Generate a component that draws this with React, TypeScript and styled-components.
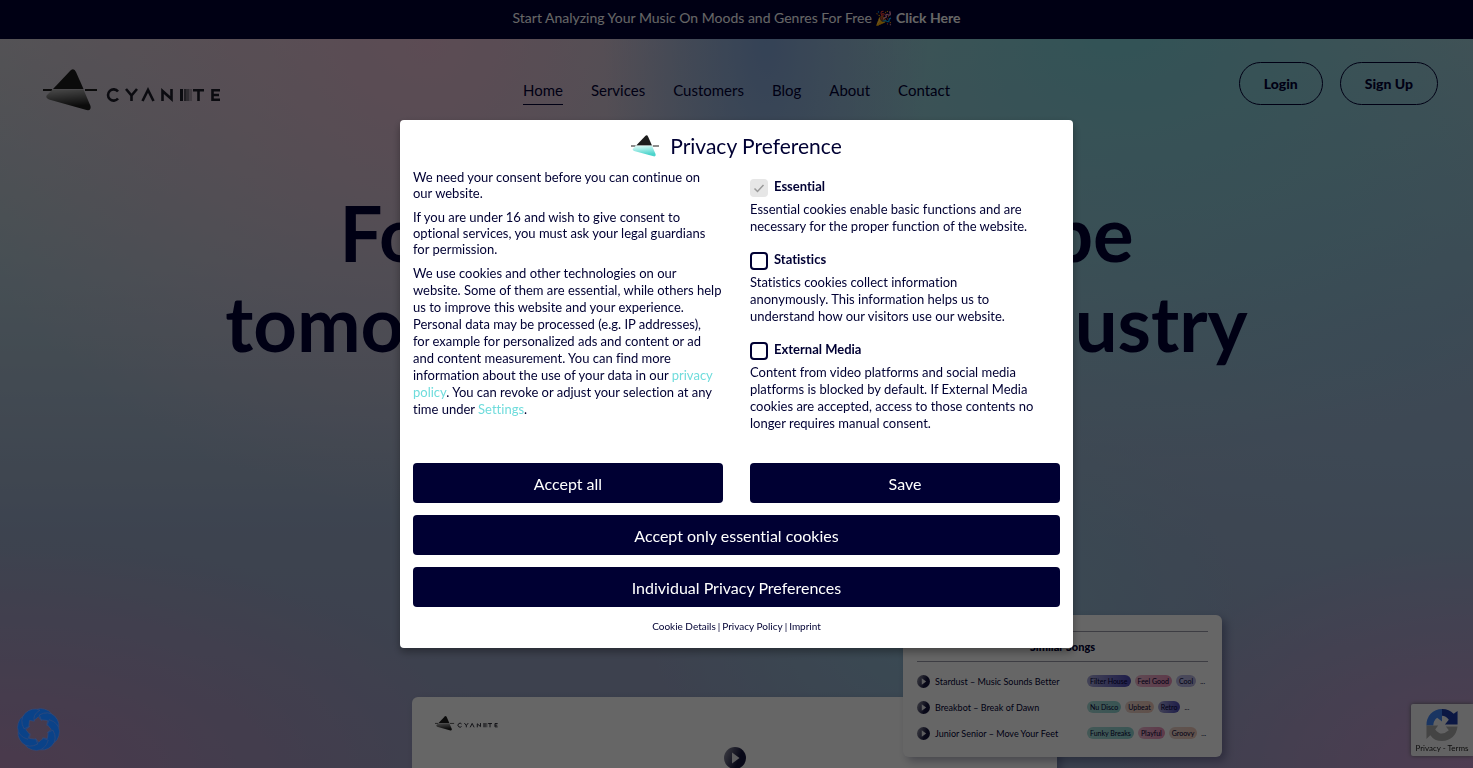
import React, { useState } from "react";
import styled, { createGlobalStyle } from "styled-components";

const navy = "#000033";
const sans = `Lato, "Open Sans", "Liberation Sans", sans-serif`;

const GlobalStyle = createGlobalStyle`
  *, *::before, *::after { box-sizing: border-box; }
  body { margin: 0; font-family: ${sans}; font-variant-ligatures: none; color: ${navy}; overflow: hidden; }
  a { color: inherit; text-decoration: none; }
  h1, h2, h3, p, ul { margin: 0; padding: 0; }
  ul { list-style: none; }
  button { font-family: inherit; font-variant-ligatures: inherit; cursor: pointer; }
`;

const Page = styled.div`
  display: flex;
  flex-direction: column;
  height: 100vh;
  overflow: hidden;
  background:
    radial-gradient(ellipse 11% 50% at 52% 5%, rgba(122, 160, 215, 0.85), transparent),
    radial-gradient(ellipse 34% 60% at 29% 6%, rgba(232, 186, 210, 0.9), transparent),
    radial-gradient(ellipse 46% 56% at 76% 4%, rgba(118, 208, 216, 0.9), transparent),
    radial-gradient(ellipse 34% 30% at 0% 100%, rgba(190, 142, 190, 0.85), transparent),
    radial-gradient(ellipse 24% 30% at 100% 100%, rgba(200, 150, 205, 0.9), transparent),
    radial-gradient(ellipse 20% 30% at 64% 80%, rgba(142, 190, 212, 0.9), transparent),
    radial-gradient(ellipse 50% 60% at 96% 46%, rgba(152, 180, 212, 0.95), transparent),
    linear-gradient(180deg, #d2d2d6 0%, #b0c6d2 34%, #98a8c6 70%, #98a0c2 100%);
`;

const PromoBar = styled.div`
  flex: none;
  display: flex;
  justify-content: center;
  height: 39px;
  background: ${navy};
  color: #fff;
  font-size: 14px;
  line-height: 36px;
  white-space: pre;
`;

const Header = styled.header`
  display: grid;
  grid-template-columns: 1fr auto 1fr;
  align-items: center;
  flex: none;
  height: 102px;
  padding: 23px 35px;
`;

const HomeLink = styled.a`
  padding-left: 8px;
`;

const LogoSvg = styled.svg`
  display: block;
`;

const Nav = styled.nav`
  display: flex;
  gap: 28px;
`;

const NavLink = styled.a<{ $active?: boolean }>`
  padding: 4px 0;
  font-size: 15px;
  line-height: 20px;
  border-bottom: 1px solid ${(p) => (p.$active ? navy : "transparent")};
`;

const Account = styled.div`
  display: flex;
  align-self: start;
  justify-content: flex-end;
  gap: 17px;
`;

const PillLink = styled.a`
  padding: 0 24px;
  border: 1px solid ${navy};
  border-radius: 22px;
  font-size: 14px;
  font-weight: 900;
  line-height: 41px;
`;

const Headline = styled.h1`
  flex: none;
  margin-top: 47px;
  text-align: center;
  font-size: 76px;
  font-weight: 700;
  line-height: 90px;
`;

const Showcase = styled.section`
  flex: none;
  position: relative;
  width: 649px;
  margin: 329px auto 0;
  padding-right: 4px;
`;

const PlayerCard = styled.div`
  display: flex;
  flex-direction: column;
  height: 360px;
  padding: 19px 23px;
  border-radius: 6px;
  background: #fff;
  box-shadow: 4px 4px 8px rgba(0, 0, 51, 0.25);
`;

const PlayerPlay = styled.div`
  align-self: center;
  margin-top: 16px;
`;

const SongsCard = styled.div`
  position: absolute;
  top: -82px;
  right: -161px;
  width: 319px;
  padding: 16px 14px 11px;
  border-radius: 6px;
  background: #fff;
  box-shadow: 4px 4px 8px rgba(0, 0, 51, 0.3);
`;

const SongsTitle = styled.h2`
  margin-bottom: 6px;
  border: solid #9a9aa8;
  border-width: 1px 0;
  text-align: center;
  font-size: 11px;
  font-weight: 900;
  line-height: 29px;
`;

const SongRow = styled.li`
  display: grid;
  grid-template-columns: 18px 152px 1fr;
  align-items: center;
  height: 26px;
  font-size: 9px;
`;

const Tags = styled.span`
  display: flex;
  align-items: center;
  gap: 4px;
  font-size: 7px;
  white-space: nowrap;
`;

const tagTones = {
  indigo: "linear-gradient(90deg, #a9a9d8, #4a48b8)",
  pink: "linear-gradient(90deg, #f0b8d0, #ea8fb8)",
  lilac: "linear-gradient(90deg, #b9b9e8, #b4b0dc)",
  mint: "linear-gradient(90deg, #a8dcd8, #8fd4d2)",
  sand: "linear-gradient(90deg, #ecd4cc, #f0c8b8)",
};

type Tone = keyof typeof tagTones;

const Tag = styled.span<{ $tone: Tone }>`
  padding: 0 3px;
  border-radius: 6px;
  line-height: 12px;
  background: ${(p) => tagTones[p.$tone]};
`;

const Backdrop = styled.div`
  position: fixed;
  inset: 0;
  display: flex;
  align-items: center;
  justify-content: center;
  background: rgba(0, 0, 0, 0.6);
`;

const Dialog = styled.form`
  width: 673px;
  max-width: 100%;
  padding: 12px 13px 15px;
  border-radius: 4px;
  background: #fff;
  box-shadow: 0 4px 8px rgba(0, 0, 0, 0.35);
`;

const DialogTitle = styled.h2`
  display: flex;
  align-items: center;
  justify-content: center;
  gap: 11px;
  font-size: 21px;
  font-weight: 400;
  line-height: 28px;
`;

const Columns = styled.div`
  display: grid;
  grid-template-columns: 1fr 1fr;
  column-gap: 27px;
`;

const Intro = styled.div`
  padding-top: 9px;
`;

const Note = styled.p`
  margin-bottom: 8px;
  font-size: 13px;
  line-height: 16px;
  white-space: pre-line;
`;

const Copy = styled.p`
  font-size: 13px;
  line-height: 17px;
  white-space: pre-line;
`;

const AccentLink = styled.a`
  color: #6fdcdc;
`;

const Options = styled.div`
  display: flex;
  flex-direction: column;
  gap: 16px;
  padding: 18px 12px 31px 0;
`;

const OptionLabel = styled.label`
  display: flex;
  gap: 6px;
  height: 23px;
  font-size: 13px;
  font-weight: 700;
  line-height: 17px;
`;

const Checkbox = styled.input`
  appearance: none;
  width: 18px;
  height: 18px;
  margin: 1px 0 0;
  border: 2px solid ${navy};
  border-radius: 4px;
  background: #fff;
  &:checked {
    background-color: ${navy};
  }
  &:disabled {
    border-color: #e6e6e6;
    background-color: #e6e6e6;
  }
`;

const CheckWrap = styled.span`
  position: relative;
  display: flex;
  svg {
    position: absolute;
    top: 4px;
    left: 3px;
    pointer-events: none;
  }
`;

const ActionButton = styled.button`
  height: 40px;
  border: 0;
  border-radius: 4px;
  background: ${navy};
  color: #fff;
  font-size: 16px;
`;

const WideActions = styled.div`
  display: flex;
  flex-direction: column;
  gap: 12px;
  margin-top: 12px;
`;

const Legal = styled.div`
  display: flex;
  justify-content: center;
  gap: 2px;
  margin-top: 12px;
  font-size: 10px;
  line-height: 14px;
`;

const CookieWidget = styled.button`
  position: fixed;
  left: 17px;
  bottom: 17px;
  width: 43px;
  height: 43px;
  padding: 0;
  border: 0;
  background: none;
`;

const Recaptcha = styled.div`
  position: fixed;
  right: 0;
  bottom: 12px;
  display: flex;
  flex-direction: column;
  align-items: center;
  width: 62px;
  padding: 4px 0 3px;
  border-radius: 2px 0 0 2px;
  background: #f6f6f8;
  box-shadow: 0 0 4px #666;
  color: #222;
  font-size: 8px;
  line-height: 10px;
`;

const Mark = ({ id, stops }: { id: string; stops: [string, string] }) => (
  <>
    <defs>
      <linearGradient id={id} x1="0" y1="0" x2="0.2" y2="1">
        <stop offset="0.1" stopColor={stops[0]} />
        <stop offset="0.9" stopColor={stops[1]} />
      </linearGradient>
    </defs>
    <path d="M10 20 27.5 1.5Q31 -1.500 33 3L40.500 20Z" fill="#1c1c1c" />
    <path d="M0 21H9M42 21H54" stroke="#1c1c1c" strokeWidth="2" />
    <path d="M9.500 20.500H40.500L47.500 37Q48.500 42 43.500 41L6 30.500Q1 28 5 25Z" fill={`url(#${id})`} />
  </>
);

const Logo = ({ id, width }: { id: string; width: number }) => (
  <LogoSvg width={width} viewBox="0 0 178 42" role="img" aria-label="Cyanite">
    <Mark id={`${id}-mark`} stops={["#a8a8a8", "#1c1c1c"]} />
    <g fill="none" stroke="#1c1c28" strokeWidth="2.600">
      <path d="M75 22.500A5.600 5.600 0 1 0 75 29.500" />
      <path d="M83 20 88.500 26.500 94 20M88.500 26V32" />
      <path d="M99.500 32 105 21 110.500 32" />
      <path d="M119.500 32V22L128.500 30V20" />
      <path d="M150 21.300H161M155.500 21V32" />
      <path d="M177 21.300H169.500V30.700H177M169.500 26H176" />
    </g>
    <path d="M137 20h3v12h-3z" fill="#1c1c28" />
    <path d="M141 20h2v12h-2z" fill="#1c1c28" opacity=".7" />
    <path d="M143 20h3v12h-3z" fill="#1c1c28" opacity=".5" />
    <path d="M146 20h3v12h-3z" fill="#1c1c28" opacity=".25" />
  </LogoSvg>
);

const PlayIcon = ({ id, size }: { id: string; size: number }) => (
  <svg width={size} height={size} viewBox="0 0 22 22" aria-hidden="true">
    <defs>
      <linearGradient id={id} x1="0" y1="0.200" x2="1" y2="0.600">
        <stop offset="0" stopColor="#8f8fa0" />
        <stop offset="0.700" stopColor="#16163e" />
      </linearGradient>
    </defs>
    <circle cx="11" cy="11" r="11" fill={`url(#${id})`} />
    <path d="M8 5.500 15.500 11 8 16.500Z" fill="#e8e8ee" />
  </svg>
);

const songs: { name: string; tags: [string, Tone][] }[] = [
  { name: "Stardust – Music Sounds Better", tags: [["Filter House", "indigo"], ["Feel Good", "pink"], ["Cool", "lilac"]] },
  { name: "Breakbot – Break of Dawn", tags: [["Nu Disco", "mint"], ["Upbeat", "sand"], ["Retro", "indigo"]] },
  { name: "Junior Senior – Move Your Feet", tags: [["Funky Breaks", "mint"], ["Playful", "pink"], ["Groovy", "sand"]] },
];

const navItems = ["Home", "Services", "Customers", "Blog", "About", "Contact"];

const options = [
  { id: "essential", label: "Essential", text: "Essential cookies enable basic functions and are\nnecessary for the proper function of the website." },
  { id: "statistics", label: "Statistics", text: "Statistics cookies collect information\nanonymously. This information helps us to\nunderstand how our visitors use our website." },
  { id: "external", label: "External Media", text: "Content from video platforms and social media\nplatforms is blocked by default. If External Media\ncookies are accepted, access to those contents no\nlonger requires manual consent." },
];

const petals = [0, 45, 90, 135, 180, 225, 270, 315];

export default function App() {
  const [consent, setConsent] = useState<Record<string, boolean>>({ essential: true });

  return (
    <>
      <GlobalStyle />
      <Page>
        <PromoBar>
          <span>Start Analyzing Your Music On Moods and Genres For Free 🎉 </span>
          <a href="#start"><b>Click Here</b></a>
        </PromoBar>
        <Header>
          <HomeLink href="#home"><Logo id="header" width={178} /></HomeLink>
          <Nav>
            {navItems.map((item, i) => (
              <NavLink key={item} href={`#${item.toLowerCase()}`} $active={i === 0}>{item}</NavLink>
            ))}
          </Nav>
          <Account>
            <PillLink href="#login">Login</PillLink>
            <PillLink href="#signup">Sign Up</PillLink>
          </Account>
        </Header>
        <Headline>For sounds bound to be<br />tomorrow’s recording industry</Headline>
        <Showcase>
          <PlayerCard>
            <Logo id="player" width={63} />
            <PlayerPlay><PlayIcon id="play-main" size={22} /></PlayerPlay>
          </PlayerCard>
          <SongsCard>
            <SongsTitle>Similar Songs</SongsTitle>
            <ul>
              {songs.map((song, i) => (
                <SongRow key={song.name}>
                  <PlayIcon id={`play-${i}`} size={13} />
                  <span>{song.name}</span>
                  <Tags>
                    {song.tags.map(([name, tone]) => <Tag key={name} $tone={tone}>{name}</Tag>)}
                    <span>...</span>
                  </Tags>
                </SongRow>
              ))}
            </ul>
          </SongsCard>
        </Showcase>
      </Page>
      <Recaptcha>
        <svg width="34" height="35" viewBox="0 0 34 36" aria-hidden="true">
          <path d="M17 1A16 16 0 0 1 29 6L33 3V17H20L24 12Q21 8 17 8Z" fill="#1c3aa9" />
          <path d="M1 18A16 16 0 0 1 17 1V14L12 10Q8 13 8 18Z" fill="#4285f4" />
          <path d="M1 18H13L10 22Q16 30 24 23L21 19H33Q31 33 17 34Q9 34 5 28L1 32Z" fill="#ababab" />
        </svg>
        <span><a href="#privacy">Privacy</a> - <a href="#terms">Terms</a></span>
      </Recaptcha>
      <Backdrop>
        <Dialog role="dialog" aria-labelledby="consent-title" onSubmit={(e) => e.preventDefault()}>
          <DialogTitle id="consent-title">
            <svg width="28" height="22" viewBox="0 0 54 42" aria-hidden="true">
              <Mark id="dialog-mark" stops={["#d4f8f4", "#4cd4cc"]} />
            </svg>
            Privacy Preference
          </DialogTitle>
          <Columns>
            <Intro>
              <Note>{"We need your consent before you can continue on\nour website."}</Note>
              <Note>{"If you are under 16 and wish to give consent to\noptional services, you must ask your legal guardians\nfor permission."}</Note>
              <Copy>
                {"We use cookies and other technologies on our\nwebsite. Some of them are essential, while others help\nus to improve this website and your experience.\nPersonal data may be processed (e.g. IP addresses),\nfor example for personalized ads and content or ad\nand content measurement. You can find more\ninformation about the use of your data in our "}
                <AccentLink href="#policy">{"privacy\npolicy"}</AccentLink>
                {". You can revoke or adjust your selection at any\ntime under "}
                <AccentLink href="#settings">Settings</AccentLink>.
              </Copy>
            </Intro>
            <Options>
              {options.map((o) => (
                <div key={o.id}>
                  <OptionLabel htmlFor={o.id}>
                    <CheckWrap>
                      <Checkbox
                        id={o.id}
                        type="checkbox"
                        checked={!!consent[o.id]}
                        disabled={o.id === "essential"}
                        onChange={(e) => setConsent({ ...consent, [o.id]: e.target.checked })}
                      />
                      {consent[o.id] && (
                        <svg width="12" height="12" viewBox="0 0 12 12" fill="none" aria-hidden="true">
                          <path d="M1.500 6.500 4.500 9.500 10.500 3" stroke="#999" strokeWidth="1.500" />
                        </svg>
                      )}
                    </CheckWrap>
                    {o.label}
                  </OptionLabel>
                  <Copy>{o.text}</Copy>
                </div>
              ))}
            </Options>
            <ActionButton type="button">Accept all</ActionButton>
            <ActionButton type="submit">Save</ActionButton>
          </Columns>
          <WideActions>
            <ActionButton type="button">Accept only essential cookies</ActionButton>
            <ActionButton type="button">Individual Privacy Preferences</ActionButton>
          </WideActions>
          <Legal>
            <a href="#details">Cookie Details</a>|<a href="#privacy-policy">Privacy Policy</a>|<a href="#imprint">Imprint</a>
          </Legal>
        </Dialog>
      </Backdrop>
      <CookieWidget type="button" aria-label="Open privacy preferences">
        <svg width="43" height="43" viewBox="-22 -22 44 44">
          {petals.map((a) => (
            <path
              key={a}
              transform={`rotate(${a})`}
              d="M-10 -11Q-7 -21 2 -21.500Q12 -21 15 -13Q6 -15 3 -9L0 -13L-5 -9Z"
              fill="#0a4288"
              stroke="#3b4c78"
              strokeWidth="0.600"
            />
          ))}
        </svg>
      </CookieWidget>
    </>
  );
}
